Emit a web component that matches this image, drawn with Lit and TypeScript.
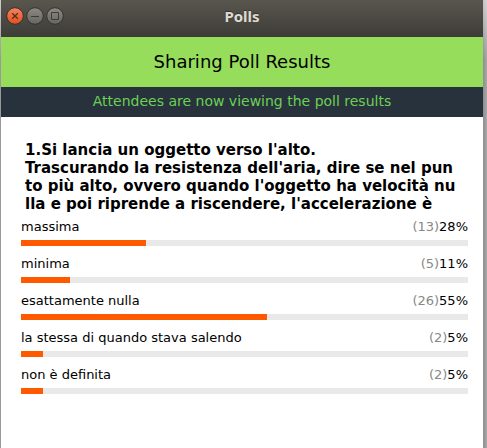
import { LitElement, html, css } from "lit";
import { customElement, property } from "lit/decorators.js";
import { styleMap } from "lit/directives/style-map.js";

interface Answer {
  label: string;
  votes: number;
  percent: number;
}

const QUESTION_LINES = [
  "1.Si lancia un oggetto verso l'alto.",
  "Trascurando la resistenza dell'aria, dire se nel pun",
  "to più alto, ovvero quando l'oggetto ha velocità nu",
  "lla e poi riprende a riscendere, l'accelerazione è",
];

const ANSWERS: Answer[] = [
  { label: "massima", votes: 13, percent: 28 },
  { label: "minima", votes: 5, percent: 11 },
  { label: "esattamente nulla", votes: 26, percent: 55 },
  { label: "la stessa di quando stava salendo", votes: 2, percent: 5 },
  { label: "non è definita", votes: 2, percent: 5 },
];

@customElement("title-bar")
class TitleBar extends LitElement {
  static styles = css`
    :host {
      display: grid;
      grid-template-columns: 1fr auto 1fr;
      align-items: center;
      height: 37px;
      padding: 0 5px;
      box-sizing: border-box;
      background: linear-gradient(#59564e, #3d3c37);
    }
    .controls {
      display: flex;
      gap: 2px;
      padding-bottom: 5px;
    }
    button {
      display: block;
      width: 18px;
      height: 18px;
      padding: 0;
      border: 0;
      background: none;
    }
    svg {
      display: block;
    }
    h1 {
      margin: 0;
      padding-bottom: 5px;
      font: bold 15px/20px "Noto Sans", sans-serif;
      color: #dfdbd2;
      text-shadow: 0 -1px #33322e;
    }
  `;

  render() {
    return html`
      <div class="controls">
        <button aria-label="Close">
          <svg width="18" height="18" viewBox="0 0 18 18">
            <defs>
              <linearGradient id="c" x2="0" y2="1">
                <stop stop-color="#f58461" />
                <stop offset="1" stop-color="#e34e1c" />
              </linearGradient>
            </defs>
            <circle cx="9" cy="9" r="8.3" fill="url(#c)" stroke="#35332e" />
            <path d="M6.2 6.2l5.6 5.6M11.8 6.2l-5.6 5.6" stroke="#51301a" stroke-width="1.3" />
          </svg>
        </button>
        <button aria-label="Minimize">
          <svg width="18" height="18" viewBox="0 0 18 18">
            <defs>
              <linearGradient id="m" x2="0" y2="1">
                <stop stop-color="#8b8982" />
                <stop offset="1" stop-color="#676660" />
              </linearGradient>
            </defs>
            <circle cx="9" cy="9" r="8.3" fill="url(#m)" stroke="#35332e" />
            <path d="M5 9.5h8" stroke="#3c3b37" />
          </svg>
        </button>
        <button aria-label="Maximize">
          <svg width="18" height="18" viewBox="0 0 18 18">
            <defs>
              <linearGradient id="x" x2="0" y2="1">
                <stop stop-color="#8b8982" />
                <stop offset="1" stop-color="#676660" />
              </linearGradient>
            </defs>
            <circle cx="9" cy="9" r="8.3" fill="url(#x)" stroke="#35332e" />
            <path d="M5.5 5.5h7v7h-7z" fill="none" stroke="#3c3b37" />
          </svg>
        </button>
      </div>
      <h1>Polls</h1>
    `;
  }
}

@customElement("poll-answer")
class PollAnswer extends LitElement {
  @property({ attribute: false }) answer!: Answer;

  static styles = css`
    :host {
      display: flex;
      flex-direction: column;
      gap: 5px;
    }
    .line {
      display: flex;
      justify-content: space-between;
      font-size: 13px;
      line-height: 16px;
      color: #000;
    }
    .votes {
      color: #888;
    }
    .track {
      height: 6px;
      background: #e9e9e9;
    }
    .fill {
      height: 100%;
      background: #ff5a00;
    }
  `;

  render() {
    const { label, votes, percent } = this.answer;
    return html`
      <div class="line">
        <span>${label}</span>
        <span><span class="votes">(${votes})</span>${percent}%</span>
      </div>
      <div
        class="track"
        role="meter"
        aria-label=${label}
        aria-valuemin="0"
        aria-valuemax="100"
        aria-valuenow=${percent}
      >
        <div class="fill" style=${styleMap({ width: `${percent}%` })}></div>
      </div>
    `;
  }
}

@customElement("app-root")
class AppRoot extends LitElement {
  static styles = css`
    :host {
      display: block;
      box-sizing: border-box;
      min-height: 100vh;
      padding: 0 4px 0 1px;
      background: linear-gradient(#ffffff80, #ffffff00 60px),
        linear-gradient(to right, #999, #8e8e8e calc(100% - 4px), #a8a8a8);
      font-family: "DejaVu Sans", sans-serif;
    }
    .window {
      min-height: 100vh;
      background: #fff;
    }
    .banner {
      margin: 0;
      background: #97dd5c;
      color: #000;
      font-size: 18px;
      font-weight: normal;
      line-height: 50px;
      text-align: center;
    }
    .status {
      margin: 0;
      padding-bottom: 2px;
      background: #27323c;
      color: #6cd054;
      font-size: 14px;
      line-height: 28px;
      text-align: center;
    }
    .poll {
      padding: 24px 15px 24px 20px;
    }
    .question {
      margin: 0 0 6px;
      padding-left: 4px;
      font-size: 15px;
      font-weight: bold;
      line-height: 18px;
      white-space: nowrap;
      color: #000;
    }
    .answers {
      display: grid;
      gap: 10px;
      margin: 0;
      padding: 0;
      list-style: none;
    }
  `;

  render() {
    return html`
      <main class="window">
        <title-bar></title-bar>
        <h2 class="banner">Sharing Poll Results</h2>
        <p class="status">Attendees are now viewing the poll results</p>
        <section class="poll">
          <h3 class="question">
            ${QUESTION_LINES.map((line) => html`<div>${line}</div>`)}
          </h3>
          <ul class="answers">
            ${ANSWERS.map(
              (answer) => html`<li><poll-answer .answer=${answer}></poll-answer></li>`
            )}
          </ul>
        </section>
      </main>
    `;
  }
}
